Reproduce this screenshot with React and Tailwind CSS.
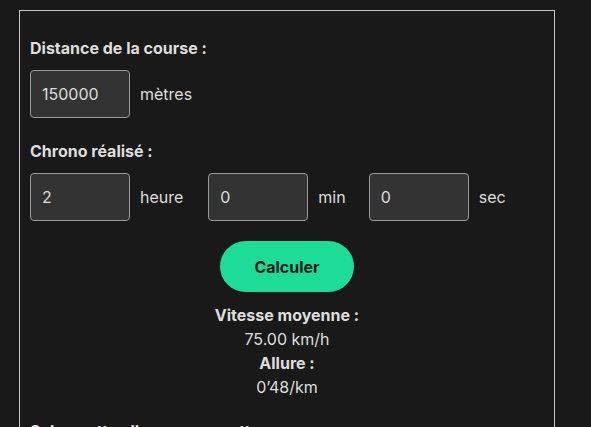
import React, { useState } from 'react';

const Field = ({ value, onChange }) => (
  <input
    type="text"
    value={value}
    onChange={(e) => onChange(e.target.value)}
    className="w-[100px] h-[48px] rounded-[4px] border border-[#9a9a9a] bg-[#333333] px-[11px] text-[16px] text-[#dedede] outline-none"
  />
);

const App = () => {
  const [distance, setDistance] = useState('150000');
  const [hours, setHours] = useState('2');
  const [minutes, setMinutes] = useState('0');
  const [seconds, setSeconds] = useState('0');

  const totalSec = (+hours || 0) * 3600 + (+minutes || 0) * 60 + (+seconds || 0);
  const speed = totalSec ? (+distance / 1000) / (totalSec / 3600) : 0;
  const paceSec = distance ? totalSec / (+distance / 1000) : 0;
  const pace = `${Math.floor(paceSec / 60)}’${String(Math.round(paceSec % 60)).padStart(2, '0')}/km`;

  return (
    <div className="min-h-screen bg-[#191919] pt-[10px] pl-[19px] font-['Inter',sans-serif] text-[16px] leading-[24px] text-[#dedede]">
      <div className="w-[536px] border border-[#c8c8c8] px-[10px] pt-[25px] pb-[40px]">
        <p className="font-bold">Distance de la course :</p>
        <div className="mt-[10px] flex items-center">
          <Field value={distance} onChange={setDistance} />
          <span className="ml-[10px]">mètres</span>
        </div>

        <p className="mt-[21px] font-bold">Chrono réalisé :</p>
        <div className="mt-[10px] flex items-center">
          <Field value={hours} onChange={setHours} />
          <span className="ml-[10px] mr-[25px]">heure</span>
          <Field value={minutes} onChange={setMinutes} />
          <span className="ml-[10px] mr-[23px]">min</span>
          <Field value={seconds} onChange={setSeconds} />
          <span className="ml-[10px]">sec</span>
        </div>

        <div className="mt-[20px] flex justify-center">
          <button className="h-[51px] w-[134px] rounded-full bg-[#1ddc98] font-bold text-[#1a1a1a]">
            Calculer
          </button>
        </div>

        <div className="mt-[11px] text-center">
          <p className="font-bold">Vitesse moyenne :</p>
          <p>{speed.toFixed(2)} km/h</p>
          <p className="font-bold">Allure :</p>
          <p>{pace}</p>
        </div>

        <p className="mt-[20px] font-bold">Selon cette allure, vous mettrez :</p>
      </div>
    </div>
  );
};

export default App;
